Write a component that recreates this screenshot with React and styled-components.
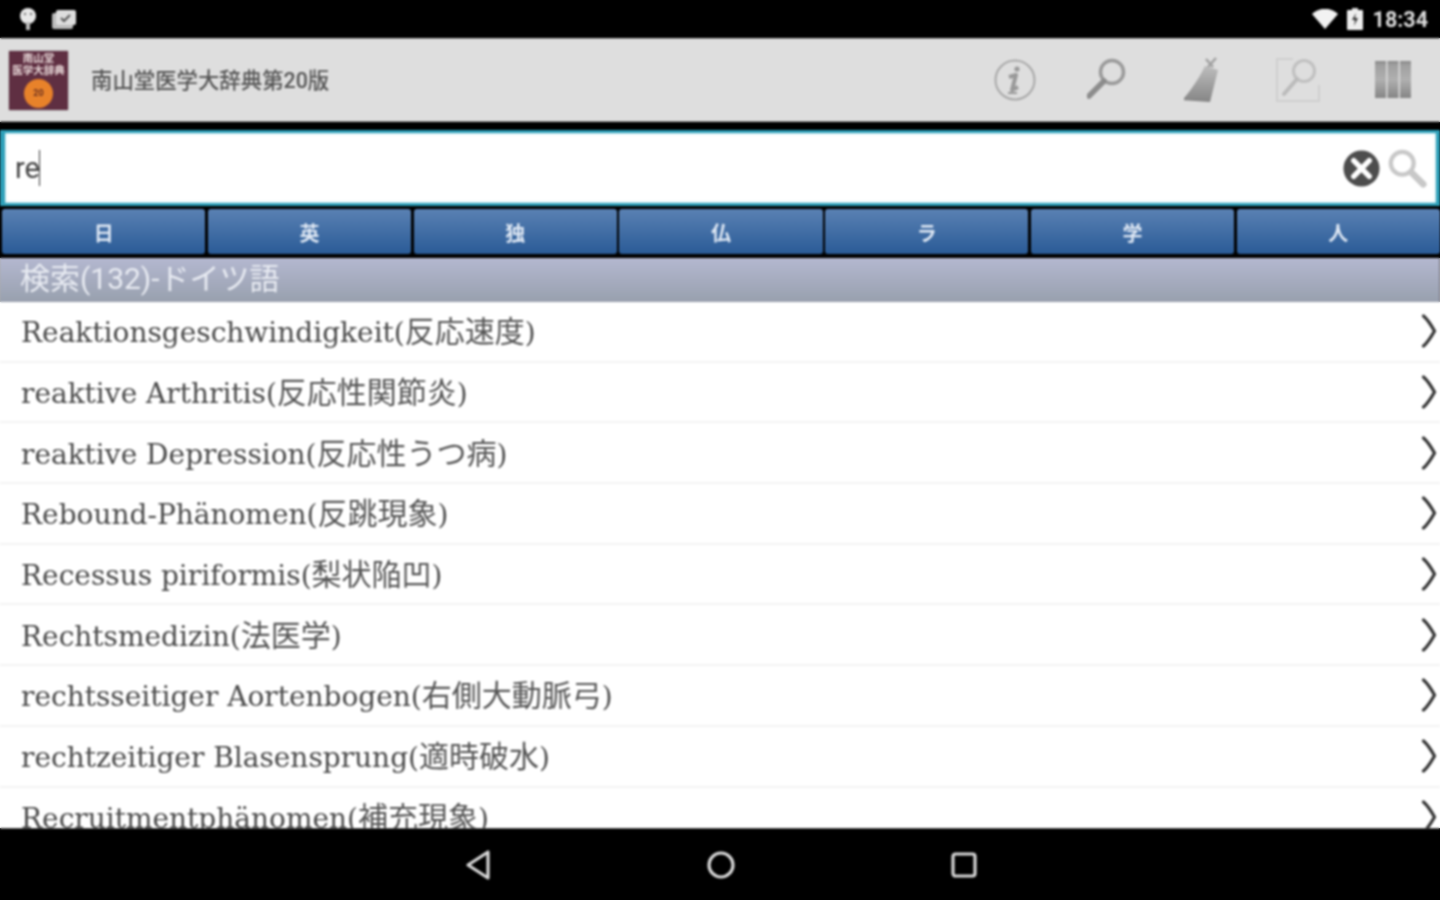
import React from "react";
import styled, { createGlobalStyle } from "styled-components";

const Global = createGlobalStyle`
  html { height: 100%; background: linear-gradient(#000 38px, #dedede 38px 122px, #000 122px 258px, #aaa 258px 302px, #fff 302px 828px, #000 828px); }
  body { margin: 0; padding: 0; }
  * { box-sizing: border-box; }
`;
const CJK = `"Noto Sans CJK JP"`;

const Screen = styled.div`
  width: 1440px; height: 900px; display: flex; flex-direction: column; overflow: hidden;
  background: #000; font-family: "Roboto", ${CJK}, sans-serif; filter: blur(0.85px);
`;
const StatusBar = styled.div`
  height: 38px; flex: none; display: flex; align-items: center; justify-content: space-between;
  padding: 0 12px 0 18px; color: #e8e8e8;
`;
const StatusGroup = styled.div`display: flex; align-items: center; gap: ${p => p.$gap || 12}px;`;
const Clock = styled.span`font-size: 21.5px; font-weight: 700; margin-left: 1px; color: #dcdcdc;`;
const ActionBar = styled.div`
  height: 84px; flex: none; display: flex; align-items: center; background: #dedede;
  border-top: 1px solid #aaa; border-bottom: 1px solid #999; padding: 0 0 0 9px;
`;
const Logo = styled.div`
  width: 59px; height: 59px; background: #5f2f42; box-shadow: 0 0 2px #999; flex: none;
  display: flex; flex-direction: column; align-items: center; padding-top: 2px; overflow: hidden;
  color: #e8d8d8; font-size: 10.5px; line-height: 12px; font-weight: 700; white-space: nowrap;
`;
const LogoCoin = styled.div`
  width: 29px; height: 29px; border-radius: 50%; background: #e8822a; color: #6a3020; margin-top: 2px; flex: none;
  display: flex; align-items: center; justify-content: center; font-size: 9px;
`;
const Title = styled.div`
  font-size: 21.4px; color: #555; margin: -4px 0 0 23px; flex: 1; font-weight: 500;
`;
const Actions = styled.div`display: flex; align-items: center;`;
const ActionSlot = styled.div`width: 94.5px; height: 60px; display: flex; align-items: center; justify-content: center;`;
const SearchWrap = styled.div`padding: 8px 0 3px; flex: none; background: #000;`;
const SearchBox = styled.div`
  height: 76px; background: #fff; border: 3px solid #2d9fb8; border-left-width: 5px; border-right-width: 4px;
  box-shadow: inset 0 0 3px #8fd3e0; display: flex; align-items: center; padding: 0 9px 0 10px;
`;
const Query = styled.div`flex: 1; font-size: 29px; color: #444; display: flex; align-items: center;`;
const Caret = styled.span`display: inline-block; width: 1.5px; height: 36px; background: #333; margin-left: -1px;`;
const SearchActions = styled.div`display: flex; align-items: center; gap: 7px;`;
const Tabs = styled.div`
  height: 45px; flex: none; display: grid; grid-template-columns: repeat(7, 1fr); column-gap: 2.5px; padding-left: 2px;
`;
const Tab = styled.div`
  background: linear-gradient(#5a81b3, #2a5b97); border-radius: 3px; display: flex; align-items: center; justify-content: center;
  color: #dfe8f4; font-size: 20px; font-weight: 700; padding-top: 1px;
`;
const ListHeader = styled.div`
  margin-top: 4px; height: 44px; flex: none; padding: 0 20px 2px; display: flex; align-items: center;
  background: linear-gradient(#b4b8d0, #98a0ae); color: #e8ebf2; font-size: 30px; line-height: 1;
  border-right: 1px solid #778;
`;
const List = styled.div`flex: 1; min-height: 0; overflow: hidden; background: #fff;`;
const Row = styled.div`
  height: 60.7px; display: flex; align-items: center; justify-content: space-between;
  padding: 0 3px 0 21px; border-bottom: 2px solid #f3f3f3;
  font-family: "DejaVu Serif", ${CJK}, serif; font-size: 28px; color: #4a4a4a; white-space: nowrap;
`;
const RowLabel = styled.span`margin-top: -4px;`;
const RowCjk = styled.span`font-size: 30px; font-family: ${CJK}, serif; font-weight: 400; color: #555;`;
const NavBar = styled.div`
  height: 72px; flex: none; background: #000; border-top: 1px solid #555; display: flex; align-items: center; justify-content: center; gap: 216px; padding-left: 2px;
`;

const rows = [
  ["Reaktionsgeschwindigkeit(", "反応速度", ")"],
  ["reaktive Arthritis(", "反応性関節炎", ")"],
  ["reaktive Depression(", "反応性うつ病", ")"],
  ["Rebound-Phänomen(", "反跳現象", ")"],
  ["Recessus piriformis(", "梨状陥凹", ")"],
  ["Rechtsmedizin(", "法医学", ")"],
  ["rechtsseitiger Aortenbogen(", "右側大動脈弓", ")"],
  ["rechtzeitiger Blasensprung(", "適時破水", ")"],
  ["Recruitmentphänomen(", "補充現象", ")"],
];
const tabs = ["日", "英", "独", "仏", "ラ", "学", "人"];

const Chevron = () => (
  <svg width="16" height="34" viewBox="0 0 16 34" fill="none" stroke="#333" strokeWidth="3.2" strokeLinecap="round" strokeLinejoin="round">
    <path d="M2.5 2c3 2.5 7 8 11 15-4 7-8 12.5-11 15" />
  </svg>
);
const Pin = () => (
  <svg width="20" height="24" viewBox="0 0 20 24"><circle cx="10" cy="9" r="8" fill="#e8e8e8"/><rect x="8" y="15" width="4" height="8" fill="#bbb"/><circle cx="7" cy="7" r="1.2" fill="#777"/><circle cx="13" cy="7" r="1.2" fill="#777"/></svg>
);
const Gallery = () => (
  <svg width="25" height="24" viewBox="0 0 25 24" fill="none"><rect x="0" y="6" width="21" height="16" rx="2" fill="#bbb"/><rect x="4" y="3" width="20" height="15" rx="2" fill="#ddd"/><path d="M9 11l3 3 6-6" stroke="#555" strokeWidth="2"/></svg>
);
const Wifi = () => (
  <svg width="26" height="20" viewBox="0 0 26 20"><path d="M0 5C7-2 19-2 26 5L13 20Z" fill="#f2f2f2"/></svg>
);
const Battery = () => (
  <svg width="16" height="22" viewBox="0 0 16 22"><rect x="5" y="0" width="6" height="3" fill="#ddd"/><rect x="0" y="2" width="16" height="20" rx="1" fill="#eee"/><path d="M9 5L5 12h3l-1 6 4-8H8z" fill="#333"/></svg>
);
const InfoIcon = () => (
  <svg width="44" height="44" viewBox="0 0 44 44" fill="none"><circle cx="22" cy="22" r="19.5" stroke="#a8a8a8" strokeWidth="2"/><circle cx="24" cy="11" r="2.6" fill="#999"/><path d="M16 19l7-2-4 15 6-3" stroke="#999" strokeWidth="4" strokeLinejoin="round"/><path d="M15 35h9" stroke="#999" strokeWidth="2"/></svg>
);
const Magnifier = () => (
  <svg width="44" height="44" viewBox="2 0 44 44" fill="none"><circle cx="27" cy="14" r="11.5" stroke="#9a9a9a" strokeWidth="3.5"/><path d="M19 23L4 38" stroke="#8c8c8c" strokeWidth="5.5" strokeLinecap="round"/></svg>
);
const Brush = () => (
  <svg width="40" height="46" viewBox="3 0 40 46"><defs><linearGradient id="br" x1="0" x2="0" y1="0" y2="1"><stop offset="0" stopColor="#bdbdbd"/><stop offset="1" stopColor="#858585"/></linearGradient></defs><path d="M24 9l13 4-8 32L1 43c9-9 17-22 23-34z" fill="url(#br)"/><path d="M25 2l7 8M35 1l-8 9" stroke="#a0a0a0" strokeWidth="2.5"/></svg>
);
const FramedSearch = () => (
  <svg width="46" height="46" viewBox="0 0 46 46" fill="none"><path d="M18 2H2v42h42V28" stroke="#cfcfcf" strokeWidth="2"/><circle cx="29" cy="14" r="10.5" stroke="#c0c0c0" strokeWidth="3"/><path d="M22 22L9 37" stroke="#bbb" strokeWidth="4" strokeLinecap="round"/></svg>
);
const Columns = () => (
  <svg width="36" height="40" viewBox="0 0 36 40"><defs><linearGradient id="c" x1="0" x2="0" y1="0" y2="1"><stop offset="0" stopColor="#8a8a8a"/><stop offset="0.12" stopColor="#a0a0a0"/><stop offset="0.5" stopColor="#b0b0b0"/><stop offset="1" stopColor="#858585"/></linearGradient></defs><rect x="0" y="1" width="11" height="37" fill="url(#c)"/><rect x="12.5" y="1" width="11" height="37" fill="url(#c)"/><rect x="25" y="1" width="11" height="37" fill="url(#c)"/></svg>
);
const ClearIcon = () => (
  <svg width="37" height="37" viewBox="0 0 38 38"><circle cx="19" cy="19" r="18.5" fill="#4d4d4d"/><path d="M11 11l16 16M27 11L11 27" stroke="#fff" strokeWidth="5.5" strokeLinecap="round"/></svg>
);
const SearchGhost = () => (
  <svg width="40" height="40" viewBox="0 0 42 42" fill="none"><circle cx="16" cy="16" r="12" stroke="#c8c8c8" strokeWidth="4.5"/><path d="M26 26l12 12" stroke="#c8c8c8" strokeWidth="7" strokeLinecap="round"/></svg>
);
const Back = () => (
  <svg width="26" height="30" viewBox="0 0 26 30" fill="none"><path d="M23 2v26L3 15z" stroke="#d8d8d8" strokeWidth="3.2" strokeLinejoin="round"/></svg>
);
const Home = () => (
  <svg width="28" height="28" viewBox="0 0 28 28" fill="none"><circle cx="14" cy="14" r="12" stroke="#d8d8d8" strokeWidth="3.2"/></svg>
);
const Recent = () => (
  <svg width="26" height="26" viewBox="0 0 26 26" fill="none"><rect x="2" y="2" width="22" height="22" rx="2.5" stroke="#d8d8d8" strokeWidth="3.2"/></svg>
);

export default function App() {
  return (
    <Screen>
      <Global />
      <StatusBar>
        <StatusGroup $gap={14}><Pin /><Gallery /></StatusGroup>
        <StatusGroup $gap={9}><Wifi /><Battery /><Clock>18:34</Clock></StatusGroup>
      </StatusBar>
      <ActionBar>
        <Logo>
          <span>南山堂</span>
          <span>医学大辞典</span>
          <LogoCoin>20</LogoCoin>
        </Logo>
        <Title>南山堂医学大辞典第20版</Title>
        <Actions>
          <ActionSlot><InfoIcon /></ActionSlot>
          <ActionSlot><Magnifier /></ActionSlot>
          <ActionSlot><Brush /></ActionSlot>
          <ActionSlot><FramedSearch /></ActionSlot>
          <ActionSlot><Columns /></ActionSlot>
        </Actions>
      </ActionBar>
      <SearchWrap>
        <SearchBox>
          <Query>re<Caret /></Query>
          <SearchActions>
            <ClearIcon />
            <SearchGhost />
          </SearchActions>
        </SearchBox>
      </SearchWrap>
      <Tabs>{tabs.map(t => <Tab key={t}>{t}</Tab>)}</Tabs>
      <ListHeader>検索(132)-ドイツ語</ListHeader>
      <List>
        {rows.map(([a, b, c]) => (
          <Row key={a}>
            <RowLabel>{a}<RowCjk>{b}</RowCjk>{c}</RowLabel>
            <Chevron />
          </Row>
        ))}
      </List>
      <NavBar><Back /><Home /><Recent /></NavBar>
    </Screen>
  );
}
